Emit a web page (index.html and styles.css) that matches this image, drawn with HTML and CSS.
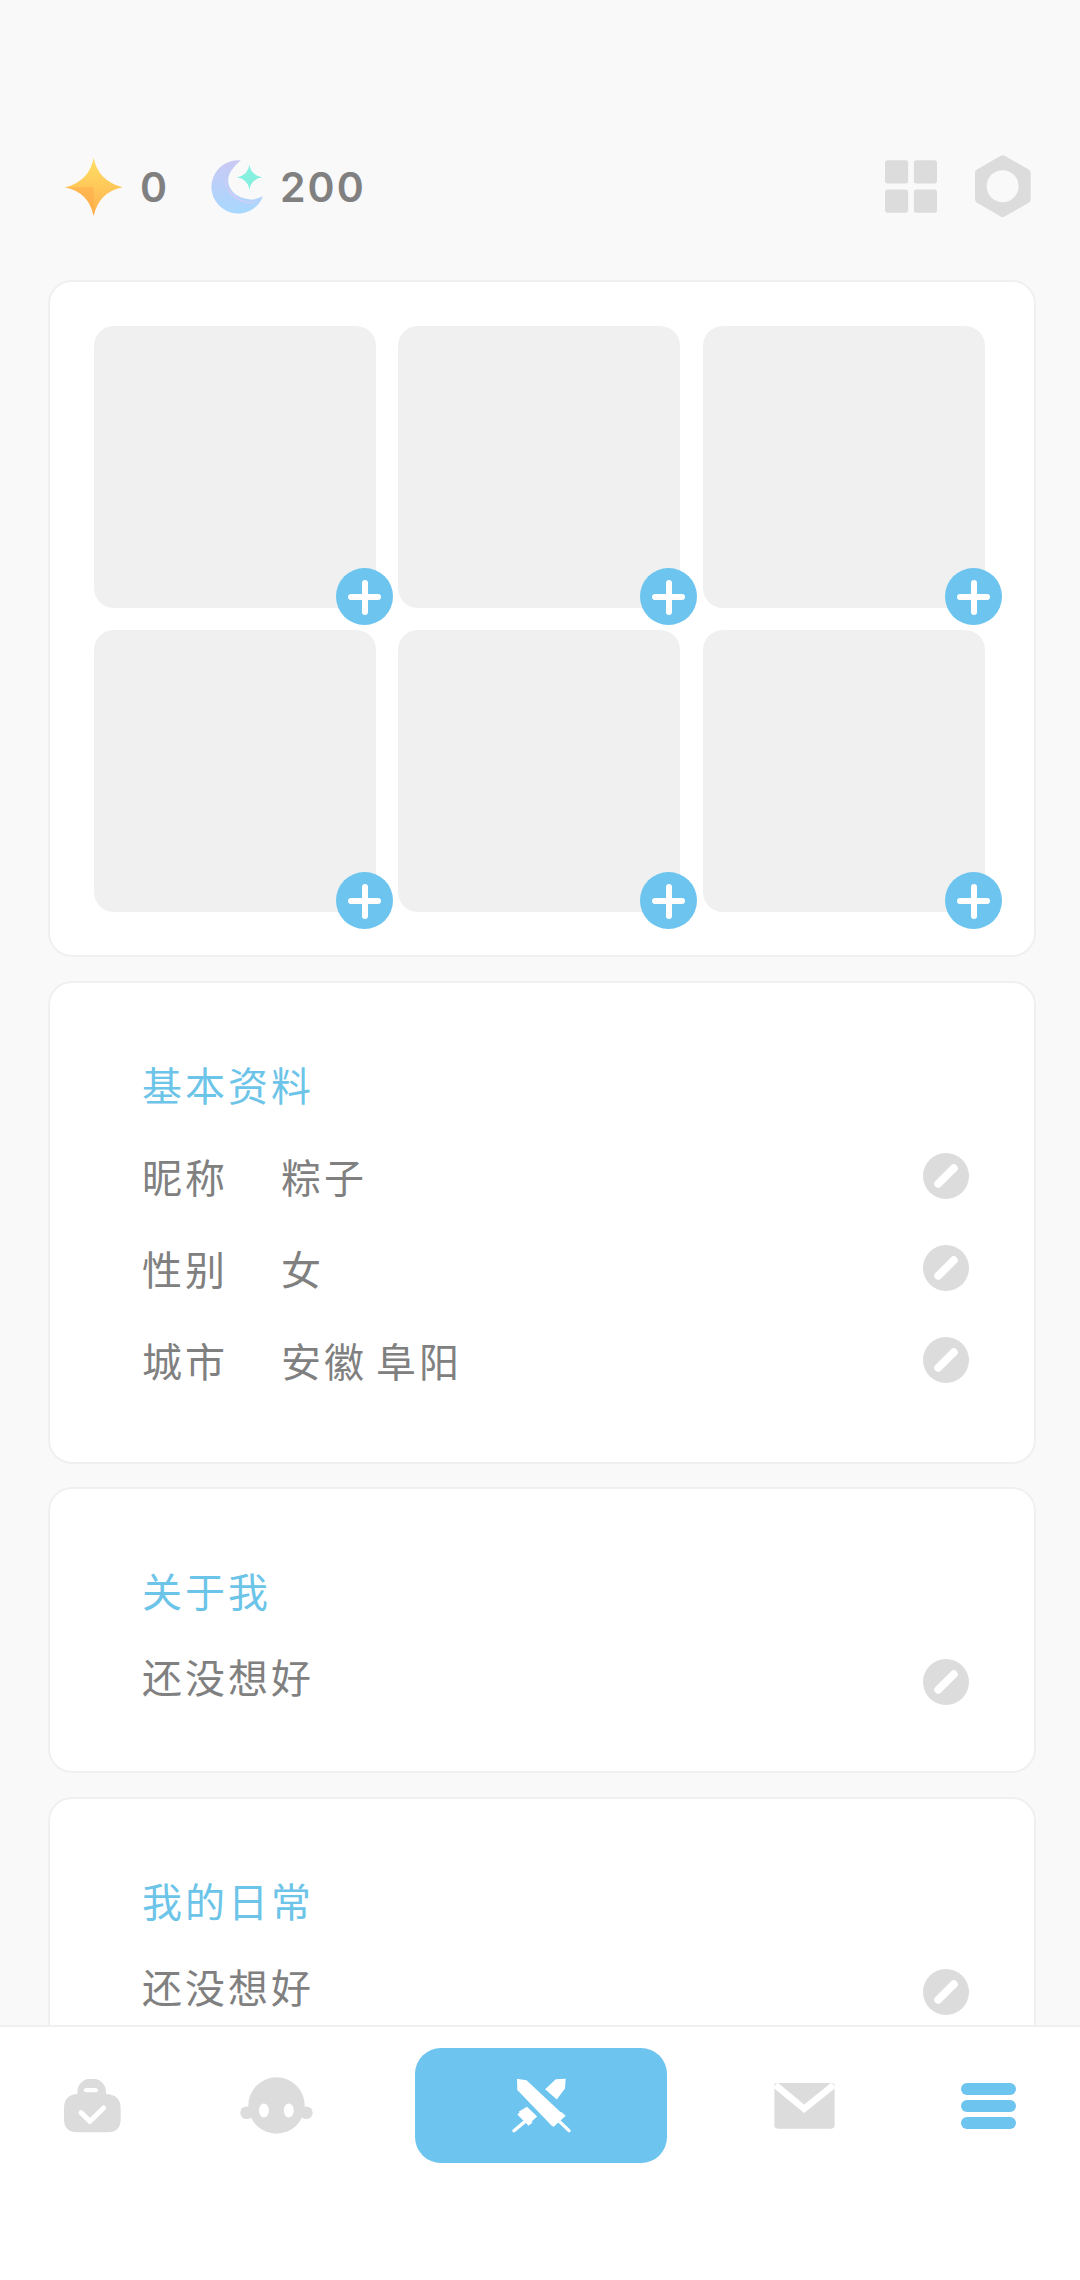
FILE: index.html
```html
<!DOCTYPE html>
<html lang="zh-CN">

<head>
    <meta charset="UTF-8">
    <title>我的资料</title>
    <link rel="stylesheet" href="styles.css">
</head>

<body>
    <div class="content">
        <!-- 顶部数值 -->
        <div class="topbar">
            <div class="coin">
                <svg class="icon-star" viewBox="78 85 166 168">
                    <defs>
                        <linearGradient id="starFill" x1="0" y1="0" x2="0" y2="1">
                            <stop offset="0" stop-color="#ffe066"/>
                            <stop offset="1" stop-color="#ffb04d"/>
                        </linearGradient>
                        <linearGradient id="moonFill" x1="0" y1="0" x2="0" y2="1">
                            <stop offset="0" stop-color="#c9c9f3"/>
                            <stop offset="1" stop-color="#a8d8ff"/>
                        </linearGradient>
                    </defs>
                    <path d="M160 85Q172 150 243 170Q175 184 160 252Q146 184 78 170Q148 152 160 85Z" fill="url(#starFill)"/>
                    <path d="M160 170L160 252Q146 184 78 170Z" fill="#ffa94a" opacity=".55"/>
                </svg>
                <span class="coin-num">0</span>
            </div>
            <div class="coin coin-moon">
                <svg class="icon-moon" viewBox="511 90 153 156">
                    <path d="M600 91A77 77 0 1 0 664 195Q625 215 585 190Q535 145 600 91Z" fill="url(#moonFill)"/>
                    <path d="M556 130Q545 175 590 205Q625 225 655 204Q620 222 585 195Q550 170 556 130Z" fill="#e3c9f2" opacity=".7"/>
                    <path d="M625 104Q629 134 662 140Q629 146 625 176Q621 146 589 140Q621 134 625 104Z" fill="#86f0e0"/>
                </svg>
                <span class="coin-num">200</span>
            </div>
            <div class="top-actions">
                <svg class="icon-grid" viewBox="135 90 157 158">
                    <rect x="135" y="90" width="70" height="70" rx="8"/>
                    <rect x="222" y="90" width="70" height="70" rx="8"/>
                    <rect x="135" y="178" width="70" height="70" rx="8"/>
                    <rect x="222" y="178" width="70" height="70" rx="8"/>
                </svg>
                <svg class="icon-hex" viewBox="405 75 168 188">
                    <path fill-rule="evenodd" d="M482 77Q488 74 494 77L566 118Q572 122 572 128V208Q572 214 566 218L494 259Q488 262 482 259L411 218Q405 214 405 208V128Q405 122 411 118ZM488 120A48 48 0 1 0 488 216A48 48 0 1 0 488 120Z"/>
                </svg>
            </div>
        </div>

        <!-- 照片墙 -->
        <div class="card photo-card">
            <div class="photo-grid">
                <div class="photo"><span class="add-btn"></span></div>
                <div class="photo"><span class="add-btn"></span></div>
                <div class="photo"><span class="add-btn"></span></div>
                <div class="photo"><span class="add-btn"></span></div>
                <div class="photo"><span class="add-btn"></span></div>
                <div class="photo"><span class="add-btn"></span></div>
            </div>
        </div>

        <div class="card info-card">
            <div class="card-title">基本资料</div>
            <div class="row">
                <span class="row-label">昵称</span>
                <span class="row-value">粽子</span>
                <span class="edit-btn"></span>
            </div>
            <div class="row">
                <span class="row-label">性别</span>
                <span class="row-value">女</span>
                <span class="edit-btn"></span>
            </div>
            <div class="row">
                <span class="row-label">城市</span>
                <span class="row-value">安徽 阜阳</span>
                <span class="edit-btn"></span>
            </div>
        </div>

        <div class="card info-card text-card">
            <div class="card-title">关于我</div>
            <div class="row row-text">
                <span class="row-value">还没想好</span>
                <span class="edit-btn"></span>
            </div>
        </div>

        <div class="card info-card text-card">
            <div class="card-title">我的日常</div>
            <div class="row row-text">
                <span class="row-value">还没想好</span>
                <span class="edit-btn"></span>
            </div>
        </div>
    </div>

    <!-- 底部导航 -->
    <div class="nav">
        <div class="nav-item">
            <svg class="icon-bag" viewBox="192 238 171 160">
                <path fill-rule="evenodd" d="M232 282V276A40 38 0 0 1 318 276V282Q362 284 362 325V358Q362 397 322 397H232Q192 397 192 358V325Q192 284 232 282ZM262 264A10 6 0 0 0 262 277H283A10 6 0 0 0 283 264Z"/>
                <path class="bag-check" d="M243 338L270 364L311 324"/>
            </svg>
        </div>
        <div class="nav-item">
            <svg class="icon-face" viewBox="720 230 220 170">
                <circle cx="830" cy="315" r="85"/>
                <circle cx="740" cy="337" r="19"/>
                <circle cx="920" cy="337" r="19"/>
                <ellipse class="face-eye" cx="792" cy="330" rx="15" ry="21"/>
                <ellipse class="face-eye" cx="867" cy="330" rx="15" ry="21"/>
            </svg>
        </div>
        <div class="nav-item">
            <div class="nav-main">
                <svg class="icon-swords" viewBox="330 238 178 166">
                    <path d="M345 240L374 245L484 348L450 382L346 274Z"/>
                    <path d="M478 340L492 352L455 386L443 374Z"/>
                    <path class="sword-line" d="M472 368L502 397"/>
                    <path d="M492 240L490 270L465 303L430 272L462 242Z"/>
                    <path d="M375 325L406 354L386 372L350 340Z"/>
                    <path d="M358 338L392 372L380 382L346 348Z"/>
                    <path class="sword-line" d="M366 372L336 397"/>
                </svg>
            </div>
        </div>
        <div class="nav-item">
            <svg class="icon-mail" viewBox="103 252 182 139">
                <path d="M110 252H278Q285 252 285 260V380Q285 390 275 390H113Q103 390 103 380V260Q103 252 110 252Z"/>
                <path class="mail-line" d="M106 258L193 330L282 258"/>
            </svg>
        </div>
        <div class="nav-item">
            <div class="menu-bars">
                <span></span>
                <span></span>
                <span></span>
            </div>
        </div>
    </div>
</body>

</html>
```

FILE: styles.css
```css
body {
    font-family: "Noto Sans CJK SC", "Noto Sans", sans-serif;
    margin: 0;
    height: 2280px;
    display: flex;
    flex-direction: column;
    overflow: hidden;
    background-color: #f9f9f9;
    color: #808080;
}

.content {
    flex: 1;
    min-height: 0;
    overflow: hidden;
    padding: 0 44px 0 48px;
}

.topbar {
    height: 280px;
    box-sizing: border-box;
    padding: 155px 5px 0 17px;
    display: flex;
    align-items: flex-start;
}

.coin {
    display: flex;
    align-items: center;
    height: 63px;
}

.coin-moon {
    margin-left: 41px;
}

.coin-num {
    font-family: Inter, "Liberation Sans", sans-serif;
    font-size: 41px;
    font-weight: 600;
    letter-spacing: 2px;
    margin-left: 17px;
}

.icon-star {
    width: 58px;
    height: 60px;
}

.icon-moon {
    width: 53px;
    height: 54px;
}

.top-actions {
    margin-left: auto;
    display: flex;
    align-items: center;
    gap: 38px;
    height: 63px;
}

.icon-grid {
    width: 52px;
    height: 53px;
    fill: #dcdcdc;
}

.icon-hex {
    width: 56px;
    height: 63px;
    fill: #dcdcdc;
}

.card {
    box-sizing: border-box;
    background-color: white;
    border: 2px solid #f0f0f0;
    border-radius: 24px;
    margin-bottom: 24px;
}

.photo-card {
    height: 677px;
    padding: 44px 0 0 44px;
}

.photo-grid {
    display: grid;
    grid-template-columns: repeat(3, 282px);
    grid-auto-rows: 282px;
    column-gap: 22.4px;
    row-gap: 22px;
}

.photo {
    position: relative;
    background-color: #f0f0f0;
    border-radius: 20px;
}

.add-btn {
    position: absolute;
    right: -17px;
    bottom: -17px;
    width: 57px;
    height: 57px;
    border-radius: 50%;
    background-color: #6cc4ef;
}

.add-btn::before,
.add-btn::after {
    content: "";
    position: absolute;
    background-color: white;
    border-radius: 3px;
}

.add-btn::before {
    left: 12px;
    top: 26px;
    width: 33px;
    height: 6px;
}

.add-btn::after {
    left: 26px;
    top: 12px;
    width: 6px;
    height: 35px;
}

.info-card {
    padding: 55px 65px 56px 92px;
    margin-bottom: 23px;
}

.text-card {
    padding-top: 55px;
    padding-bottom: 43px;
    margin-bottom: 24px;
}

.card-title {
    color: #6cc4e8;
    font-size: 40px;
    letter-spacing: 3px;
    line-height: 92px;
}

.row {
    display: flex;
    align-items: center;
    height: 92px;
    font-size: 40px;
    letter-spacing: 3px;
    word-spacing: -3px;
}

.row-label {
    width: 139px;
}

.row-text .row-value {
    margin-bottom: 12px;
}

.edit-btn {
    position: relative;
    margin-left: auto;
    width: 46px;
    height: 46px;
    border-radius: 50%;
    background-color: #dcdcdc;
}

.edit-btn::after {
    content: "";
    position: absolute;
    left: 8px;
    top: 19px;
    width: 30px;
    height: 8px;
    border-radius: 4px;
    background-color: white;
    transform: rotate(-45deg);
}

.nav {
    height: 255px;
    box-sizing: border-box;
    flex-shrink: 0;
    background-color: white;
    border-top: 2px solid #f0f0f0;
    padding-top: 21px;
    display: grid;
    grid-template-columns: 184px 184px 346px 180px 188px;
    align-items: start;
}

.nav-item {
    display: flex;
    justify-content: center;
    align-items: center;
    height: 115px;
}

.nav-main {
    width: 252px;
    height: 115px;
    border-radius: 26px;
    background-color: #6cc4ef;
    display: flex;
    justify-content: center;
    align-items: center;
}

.icon-bag {
    width: 57px;
    height: 54px;
    fill: #dcdcdc;
}

.bag-check {
    fill: none;
    stroke: white;
    stroke-width: 15;
    stroke-linecap: round;
    stroke-linejoin: round;
}

.icon-face {
    width: 73px;
    height: 57px;
    fill: #dcdcdc;
}

.face-eye {
    fill: white;
}

.icon-swords {
    width: 59px;
    height: 55px;
    fill: white;
}

.sword-line {
    fill: none;
    stroke: white;
    stroke-width: 10;
    stroke-linecap: round;
}

.icon-mail {
    width: 61px;
    height: 46px;
    fill: #dcdcdc;
}

.mail-line {
    fill: none;
    stroke: white;
    stroke-width: 20;
}

.menu-bars {
    display: flex;
    flex-direction: column;
    gap: 5px;
}

.menu-bars span {
    width: 55px;
    height: 12px;
    border-radius: 6px;
    background-color: #6cc4ef;
}
```
